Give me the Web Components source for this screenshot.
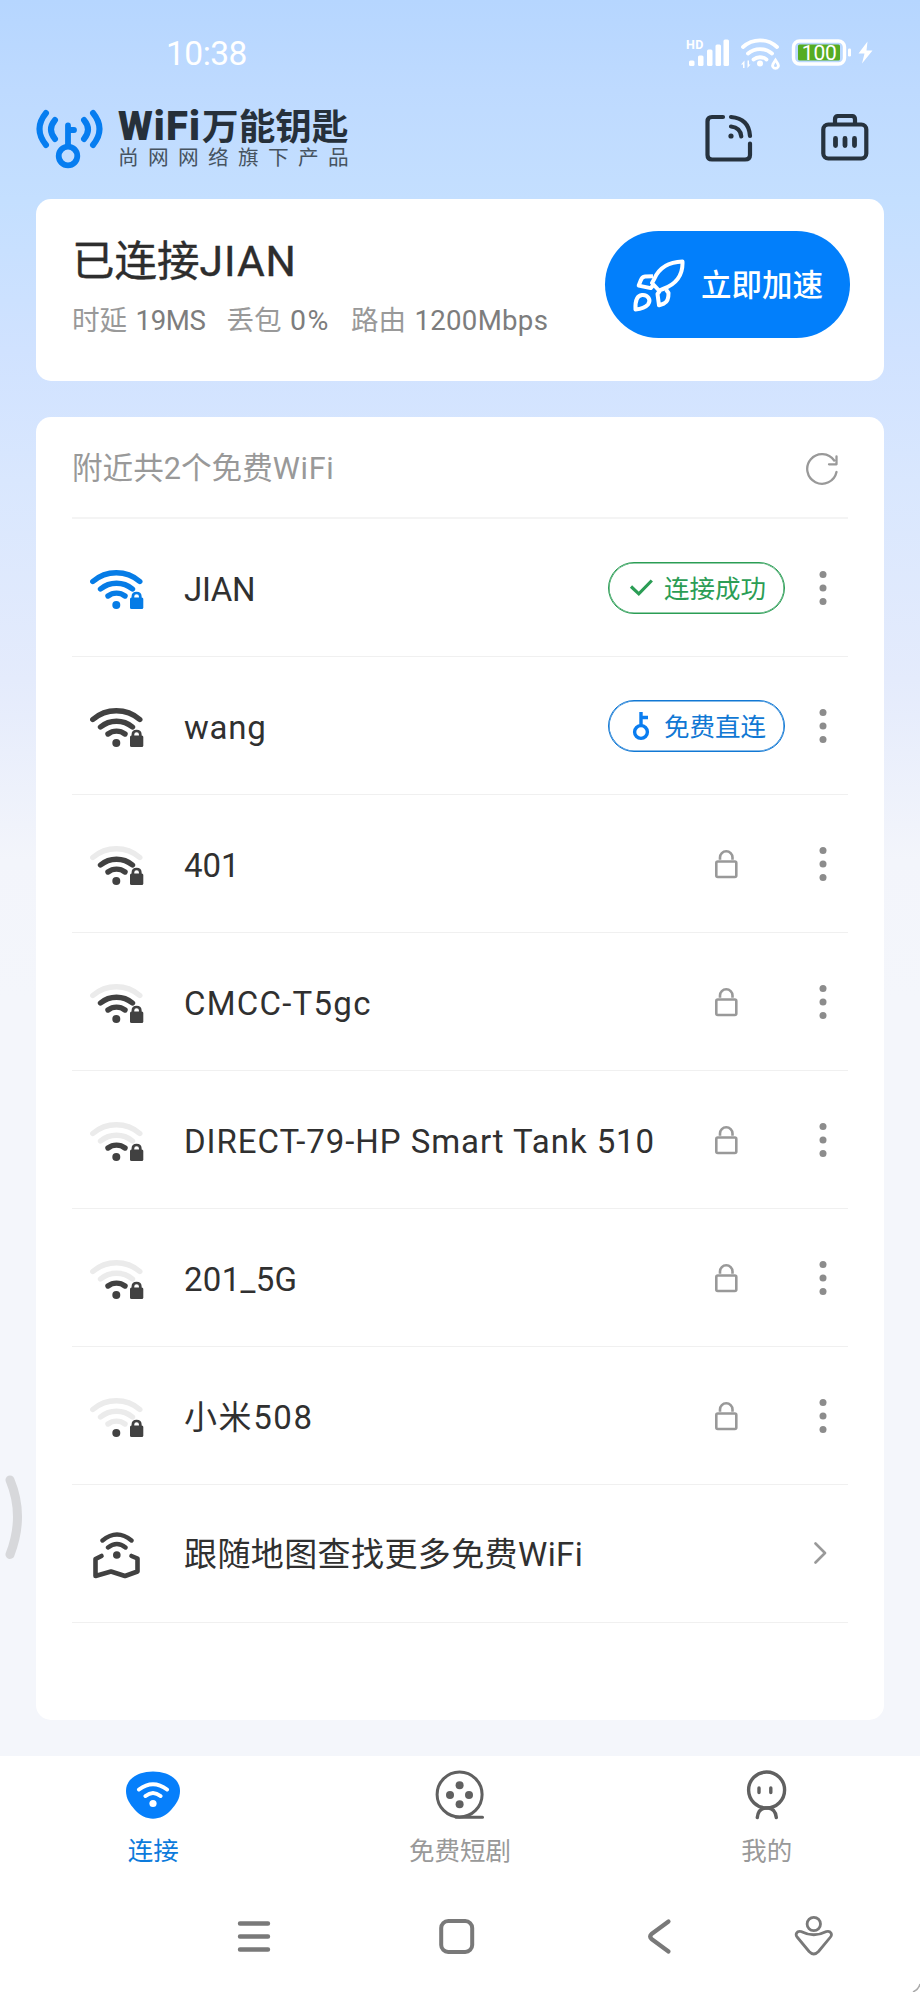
<!DOCTYPE html>
<html lang="zh-CN">
<head>
<meta charset="utf-8">
<title>WiFi万能钥匙</title>
<style>
  html, body { margin: 0; padding: 0; }
  body { font-family: Roboto, "Noto Sans CJK SC", sans-serif; color: #333; -webkit-font-smoothing: antialiased; }
</style>
</head>
<body>
<app-screen>
  <status-bar></status-bar>
  <app-header></app-header>
  <speed-card></speed-card>
  <network-list>
    <network-row level="3" status="ok" tint="#067ce6" style="--ls:-.3px">JIAN</network-row>
    <network-row level="3" status="free" style="--ls:.8px">wang</network-row>
    <network-row level="2">401</network-row>
    <network-row level="2" style="--ls:1.25px">CMCC-T5gc</network-row>
    <network-row level="1" style="--ls:.93px">DIRECT-79-HP Smart Tank 510</network-row>
    <network-row level="1" style="--ls:.3px">201_5G</network-row>
    <network-row level="0" style="--ls:1.6px">小米508</network-row>
    <map-row style="--ls:.4px">跟随地图查找更多免费WiFi</map-row>
  </network-list>
  <tab-bar slot="bottom"></tab-bar>
  <system-nav slot="bottom"></system-nav>
  <edge-handle slot="over"></edge-handle>
</app-screen>

<script>
const define = (name, html) => customElements.define(name, class extends HTMLElement {
  constructor() {
    super();
    this.attachShadow({ mode: 'open' });
  }
  connectedCallback() {
    this.shadowRoot.innerHTML = typeof html === 'function' ? html(this) : html;
  }
});

define('app-screen', `
<style>
  :host { display: flex; flex-direction: column; position: relative; width: 920px; height: 1992px; overflow: hidden;
    background: linear-gradient(180deg, #b6d6ff 0, #bedaff 90px, #c4dfff 200px, #d0e2ff 350px, #d9e7fe 480px, #e4ebfc 680px, #f3f5fb 860px, #f4f6fb 1000px); }
  .main { display: flex; flex-direction: column; height: 1756px; }
</style>
<div class="main"><slot></slot></div>
<slot name="bottom"></slot>
<slot name="over"></slot>`);

define('status-bar', `
<style>
  :host { display: flex; justify-content: space-between; align-items: center; height: 78px; padding: 28px 44px 0 166px; box-sizing: border-box; color: #fff; }
  span { font-size: 33.5px; line-height: 40px; letter-spacing: -.5px; padding-top: 1px; }
  svg { display: block; }
</style>
<span>10:38</span>
<svg width="192" height="40" viewBox="684 33.500 192 40" fill="#fff">
  <text x="686" y="49.5" font-size="12.5" font-weight="700" letter-spacing=".4">HD</text>
  <rect x="689" y="61" width="5.500" height="5.5" rx="1.5"/><rect x="698" y="56" width="5.500" height="10.5" rx="1.5"/>
  <rect x="707" y="50" width="5.500" height="16.5" rx="1.5"/><rect x="715.5" y="45" width="5.500" height="21.5" rx="1.5"/>
  <rect x="723.500" y="40" width="5.500" height="26.5" rx="1.5"/>
  <g fill="none" stroke="#fff" stroke-width="3.8" stroke-linecap="round">
    <path d="M743 47.5a25 25 0 0 1 34 0M748 54a18.500 18.500 0 0 1 24 0M753.500 60a10.500 10.500 0 0 1 13 0"/>
  </g>
  <circle cx="760" cy="64" r="3"/>
  <path d="M741 65l3.500-4v7.500h-1.500v-3.500zM747.500 68.500l3-3.500h-1.500v-4h-1.500z"/>
  <path fill-rule="evenodd" d="M775.500 58l-3.800 6a4.300 4.300 0 1 0 7.600 0zM775.500 63l1.300 2.500a1.400 1.400 0 1 1-2.600 0z"/>
  <rect x="793.500" y="41.500" width="51" height="23" rx="6" fill="none" stroke="#fff" stroke-width="3.400"/>
  <rect x="798" y="45" width="42" height="16" rx="1.500" fill="#55ac22"/>
  <text x="819.200" y="60.700" font-size="21" text-anchor="middle" letter-spacing="-.2">100</text>
  <rect x="848" y="49" width="3" height="8" rx="1.300"/>
  <path d="M867.500 42l-9 12h6l-2.500 10 10.500-13h-6z"/>
</svg>`);

define('app-header', `
<style>
  :host { display: flex; align-items: center; height: 121px; padding: 0 51px 0 36px; box-sizing: border-box; }
  svg { display: block; flex: none; }
  .brand { display: flex; flex-direction: column; margin: -1px auto 0 14px; width: 239px; color: #26303a; }
  .name { display: flex; align-items: baseline; height: 38px; line-height: 38px; font-weight: 700; font-size: 36.600px; white-space: nowrap; padding-top: 1px; }
  .name b { font-size: 40px; letter-spacing: 1.1px; margin-right: 1px; }
  .sub { font-size: 20.700px; letter-spacing: 9.300px; line-height: 24px; color: #46535f; white-space: nowrap; }
  .tools { display: flex; gap: 68px; }
</style>
<svg width="68" height="62" viewBox="36 107 68 62" fill="none" stroke="#067df0" stroke-width="6" stroke-linecap="round">
  <path d="M46 112q-13 16 0 32M55 119q-8 9.500 0 19M93 112q13 16 0 32M84 119q8 9.500 0 19"/>
  <circle cx="68" cy="155" r="9.300" stroke-width="5.800"/>
  <path d="M68 145v-20.500M68.500 129h5.500" stroke-width="5.800"/>
</svg>
<div class="brand"><div class="name"><b>WiFi</b>万能钥匙</div><div class="sub">尚网网络旗下产品</div></div>
<div class="tools">
  <svg width="48" height="50" viewBox="705 113.500 48 50" fill="none" stroke="#26323e" stroke-width="4.200" stroke-linecap="round">
    <path d="M723 116.500h-11q-4.500 0-4.500 4.500v33.500q0 4.500 4.500 4.500h33q5 0 5-4.500v-11.500"/>
    <path d="M731 116.500q18 1.500 19 19M731 126q9.500 1 10.300 10"/>
    <circle cx="731" cy="135.500" r="2.600" fill="#26323e" stroke="none"/>
  </svg>
  <svg width="48" height="50" viewBox="821 113.500 48 50" fill="none" stroke="#26323e" stroke-width="4.200" stroke-linecap="round">
    <rect x="823.300" y="124" width="43" height="34" rx="5"/>
    <path d="M835 123v-4q0-3.500 3.500-3.500h13q3.500 0 3.500 3.500v4"/>
    <path d="M835.500 138v7M845 138v7M854.500 138v7" stroke-width="4.800"/>
  </svg>
</div>`);

define('speed-card', `
<style>
  :host { display: flex; justify-content: space-between; align-items: flex-start; height: 182px; margin: 0 36px; padding: 32px 34.500px 0 36px; box-sizing: border-box; background: #fff; border-radius: 15px; flex: none; }
  h1 { margin: 3px 0 0; font-size: 42.500px; line-height: 56px; font-weight: 400; color: #2d2d2d; -webkit-text-stroke: .4px; white-space: nowrap; }
  h1 span { letter-spacing: 1px; }
  .stats { display: flex; gap: 21px; margin-top: 13px; font-size: 27.600px; line-height: 36px; word-spacing: 1.500px; color: #999; white-space: nowrap; }
  .stats b { font-weight: 400; color: #7d7d7d; }
  .ms { letter-spacing: -.4px; }
  .loss { font-size: 28.500px; letter-spacing: 1.500px; }
  .rate { letter-spacing: .3px; }
  button { all: unset; display: flex; align-items: center; box-sizing: border-box; width: 244.500px; height: 107px; border-radius: 54px; background: #027ffb; color: #fff; padding-left: 26px; font-size: 30.500px; font-weight: 500; white-space: nowrap; }
  button svg { margin-right: 16px; }
  button span { padding-bottom: 4px; }
</style>
<div>
  <h1>已连接<span>JIAN</span></h1>
  <div class="stats"><span>时延 <b class="ms">19MS</b></span><span>丢包 <b class="loss">0%</b></span><span>路由 <b class="rate">1200Mbps</b></span></div>
</div>
<button>
  <svg width="54" height="54" viewBox="631 256 54 54" fill="none" stroke="#fff" stroke-width="4" stroke-linejoin="round">
    <path d="M654.500 276.500c5-11.500 15-16.500 28-17c.5 12.500-5.500 22.500-19.500 27.500l-4 1.500l-7-7.500z"/>
    <path d="M653 274.300l-8 .3c-2.500.2-3.500 1.500-4.300 4l-2 5l12 2.500l3.500-4M666 287.500l2.500 3.500c.2 6-1.500 9-4.500 10.500l-5 1.800l-1.500-11.300l2.500-3.500"/>
    <path d="M635.500 307.500c-.5-9 2-14 6.500-14.500c6-.5 9.500 5 6 9.500c-2.500 3-7 4.500-12.500 5z"/>
  </svg><span>立即加速</span>
</button>`);

define('network-list', `
<style>
  :host { display: flex; flex-direction: column; height: 1303px; margin: 36px 36px 0; padding: 0 36px; box-sizing: border-box; background: #fff; border-radius: 15px; flex: none; }
  header { display: flex; justify-content: space-between; align-items: center; height: 102px; box-sizing: border-box; border-bottom: 2px solid #f4f4f4; color: #999; font-size: 30.600px; padding: 0 9px 0 0; }
  .t { padding-bottom: 2px; }
  .t i { font-style: normal; letter-spacing: .7px; }
  svg { margin-top: 3px; }
</style>
<header><span class="t">附近共2个免费<i>WiFi</i></span>
  <svg width="34" height="34" viewBox="804.500 451 34 34" fill="none" stroke="#999" stroke-width="2.300" stroke-linecap="round" stroke-linejoin="round">
    <path d="M836 471a14.800 14.800 0 1 1-2.300-11.500M836 455.500v7.800h-7.500"/>
  </svg>
</header>
<slot></slot>`);

const rowStyle = `
  :host { display: flex; align-items: center; height: 138px; box-sizing: border-box; padding: 2px 0 0; border-bottom: 1px solid #f0f0f0; color: #303030; }
  .icon { flex: none; width: 54px; margin: 0 40px 0 18px; }
  .name { flex: 1; font-size: 33px; line-height: 44px; letter-spacing: var(--ls, 0); white-space: nowrap; padding-top: 2px; }
  svg { display: block; }`;

const statusPart = {
  ok: `<div class="pill" style="color:#2b9d55"><svg width="30" height="30" viewBox="626 573 30 30" fill="none" stroke="currentColor" stroke-width="3.200"><path d="M631 586.500l7.800 7.300l13-13.300"/></svg><span>连接成功</span></div>`,
  free: `<div class="pill" style="color:#1178d4"><svg width="30" height="30" viewBox="626 711 30 30" fill="none" stroke="#0a7df0" stroke-width="3.400"><circle cx="641" cy="732" r="6.400"/><path d="M641 725.500v-13.500M641 717.500h7"/></svg><span>免费直连</span></div>`,
  lock: `<svg class="lock" width="24" height="30" viewBox="714 849 24 30" fill="none" stroke="#999" stroke-width="2.600"><rect x="716.300" y="861.500" width="20" height="15.500" rx="1.500"/><path d="M720 859.800v-2.300a6.200 6.200 0 0 1 12.500 0v2.300"/></svg>`
};

define('network-row', el => {
  const level = Number(el.getAttribute('level'));
  const tint = el.getAttribute('tint') || '#414141';
  const arc = n => level >= n ? tint : '#ebebeb';
  return `
<style>${rowStyle}
  .pill { display: flex; align-items: center; width: 177px; height: 52px; box-sizing: border-box; border: 1.600px solid; border-radius: 26px; padding-left: 17px; font-size: 25.500px; gap: 8px; margin-right: 34px; white-space: nowrap; margin-top: -2px; }
  .pill { box-shadow: inset 0 0 0 .6px currentColor; }
  .pill span { padding-bottom: 2px; }
  .lock { margin: -2px 81px 0 0; }
  .more { margin: -2px 21px 0 0; }
</style>
<svg class="icon" width="54" height="44" viewBox="90 567 54 44" fill="none" stroke-width="5.400" stroke-linecap="round">
  <path d="M92.800 581.500a36 36 0 0 1 47 0" stroke="${arc(3)}"/>
  <path d="M100.500 589a25 25 0 0 1 32 0" stroke="${arc(2)}"/>
  <path d="M108 596a14 14 0 0 1 17 0" stroke="${arc(1)}"/>
  <circle cx="116.300" cy="605" r="4" fill="${tint}"/>
  <rect x="130" y="597.500" width="13.300" height="11.500" rx="1.500" fill="${tint}"/>
  <path d="M132.900 599v-2.500q0-3.500 3.700-3.500t3.700 3.500v2.500" stroke="${tint}" stroke-width="2.700"/>
</svg>
<span class="name"><slot></slot></span>
${statusPart[el.getAttribute('status') || 'lock']}
<svg class="more" width="8" height="36" viewBox="0 0 8 36" fill="#8c8c8c"><circle cx="4" cy="4.500" r="3.500"/><circle cx="4" cy="18" r="3.500"/><circle cx="4" cy="31.500" r="3.500"/></svg>`;
});

define('map-row', `
<style>${rowStyle}
  .name { padding: 0; }
  .go { margin-right: 21px; margin-top: -3px; }
</style>
<svg class="icon" width="54" height="54" viewBox="89.500 1527.500 54 54" fill="none" stroke="#414141" stroke-width="4.600" stroke-linecap="round" stroke-linejoin="round">
  <path d="M102 1540q14.500-12 29 0M107.500 1547q9-7 17.500 0" stroke-width="4.400"/>
  <circle cx="116.300" cy="1554.500" r="3.800" fill="#414141" stroke="none"/>
  <path d="M101 1555.500l-6 3v17l15.500-4.500l14 4.500l12.500-4.500v-13l-6-2.500"/>
</svg>
<span class="name"><slot></slot></span>
<svg class="go" width="14" height="22" viewBox="0 0 14 22" fill="none" stroke="#999" stroke-width="2.600" stroke-linecap="round" stroke-linejoin="round"><path d="M2.500 1.500l9.500 9.500l-9.500 9.500"/></svg>`);

define('tab-bar', `
<style>
  :host { display: grid; grid-template-columns: repeat(3, 1fr); height: 124px; background: #fff; flex: none; }
  .tab { display: flex; flex-direction: column; align-items: center; padding-top: 13px; font-size: 25.500px; line-height: 34px; color: #999; }
  .on { color: #0c7bdc; }
  svg { display: block; margin-bottom: 13px; }
</style>
<div class="tab on"><svg width="56" height="52" viewBox="125 1769 56 52">
  <path d="M126 1791c0-26 54-26 54 0c0 8-4 13-9 19c-10 11.500-26 11.500-36 0c-5-6-9-11-9-19z" fill="#067ffb"/>
  <g fill="none" stroke="#fff" stroke-width="4" stroke-linecap="round"><path d="M139 1789.500q14-10.500 28 0M145.500 1796q7.500-6 15 0"/></g>
  <circle cx="153" cy="1803.500" r="3.600" fill="#fff"/></svg>连接</div>
<div class="tab"><svg width="56" height="52" viewBox="432 1769 56 52" fill="#606060">
  <g fill="none" stroke="#606060" stroke-width="3" stroke-linecap="round"><circle cx="459.600" cy="1794.500" r="22.500"/><path d="M456 1817.300h26.500"/></g>
  <circle cx="459.600" cy="1785.300" r="4"/><circle cx="450" cy="1795" r="4"/><circle cx="469" cy="1795" r="4"/><circle cx="459.600" cy="1804.300" r="4"/></svg>免费短剧</div>
<div class="tab"><svg width="56" height="52" viewBox="738.700 1769 56 52" fill="none" stroke="#606060" stroke-width="3.400" stroke-linecap="round">
  <circle cx="766.300" cy="1790" r="18"/><path d="M758.700 1788v4.500M770.500 1788v4.500"/><path d="M757 1817.500q1-9 8-9.500h3q7 .5 8 9.500"/></svg>我的</div>`);

define('system-nav', `
<style>
  :host { display: grid; grid-template-columns: 40px 40px 40px 40px; column-gap: 162px; align-items: center; height: 112px; padding-left: 234px; box-sizing: border-box; background: #fff; flex: none; position: relative; }
  svg { display: block; }
  .person { margin-left: -46px; }
  .corner { position: absolute; right: 0; bottom: 0; }
</style>
<svg width="40" height="40" viewBox="234 1916 40 40" stroke="#797979" stroke-width="4.400" stroke-linecap="round"><path d="M240 1923.500h28M240 1936.500h28M240 1949.500h28"/></svg>
<svg width="40" height="40" viewBox="436 1916 40 40" fill="none" stroke="#797979" stroke-width="4"><rect x="441.200" y="1921" width="31" height="31" rx="7"/></svg>
<svg width="40" height="40" viewBox="637 1916 40 40" fill="none" stroke="#797979" stroke-width="4.200" stroke-linecap="round" stroke-linejoin="round"><path d="M667.500 1921.500l-17 12.500q-2.500 2.500 0 5l17 12.500"/></svg>
<svg class="person" width="40" height="44" viewBox="794 1914 40 44" fill="none" stroke="#797979" stroke-width="2.800" stroke-linejoin="round"><circle cx="813.800" cy="1924" r="6.700"/><path d="M801 1931.500q12.800 6.500 25.500 0c4.500-1 6 3 4 5.500l-12 14.500q-4.700 5-9.400 0l-12-14.500c-2-2.500-.5-6.500 3.900-5.500z"/></svg>
<svg class="corner" width="8" height="10" fill="none" stroke="#aaa" stroke-width="1.500"><path d="M8 2q-1 5-7 8"/></svg>`);

define('edge-handle', `
<style>:host { display: block; position: absolute; left: 0; top: 1470px; } svg { display: block; }</style>
<svg width="26" height="94" viewBox="0 1470 26 94" fill="none" stroke="#d7d8db" stroke-width="9" stroke-linecap="round"><path d="M10 1480q15 36 0 74.500"/></svg>`);
</script>
</body>
</html>
